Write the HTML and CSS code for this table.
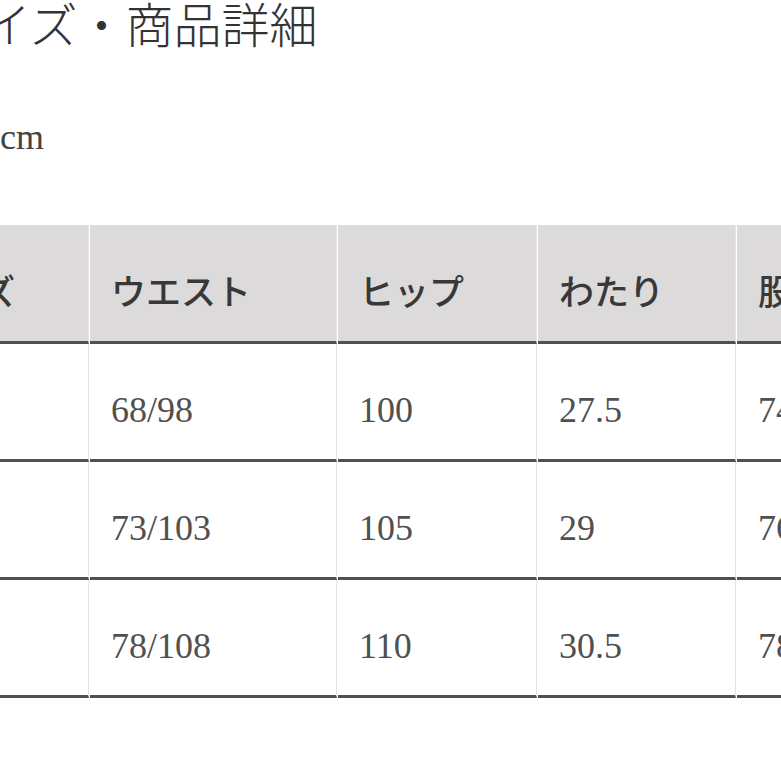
FILE: index.html
```html
<!DOCTYPE html>
<html lang="ja">
<head>
<meta charset="utf-8">
<title>サイズ・商品詳細</title>
<link rel="stylesheet" href="styles.css">
</head>
<body>
<div class="page">
  <h1 class="title">サイズ・商品詳細</h1>
  <p class="unit">cm</p>
  <table class="size-table">
    <colgroup>
      <col class="c-size">
      <col class="c-waist">
      <col class="c-hip">
      <col class="c-thigh">
      <col class="c-inseam">
    </colgroup>
    <thead>
      <tr>
        <th>サイズ</th>
        <th>ウエスト</th>
        <th>ヒップ</th>
        <th>わたり</th>
        <th>股下</th>
      </tr>
    </thead>
    <tbody>
      <tr>
        <td>S</td>
        <td>68/98</td>
        <td>100</td>
        <td>27.5</td>
        <td>74</td>
      </tr>
      <tr>
        <td>M</td>
        <td>73/103</td>
        <td>105</td>
        <td>29</td>
        <td>76</td>
      </tr>
      <tr>
        <td>L</td>
        <td>78/108</td>
        <td>110</td>
        <td>30.5</td>
        <td>78</td>
      </tr>
    </tbody>
  </table>
</div>
</body>
</html>
```
FILE: styles.css
```css
html, body {
  margin: 0;
  padding: 0;
  background: #ffffff;
  overflow: hidden;
}

.page {
  margin-left: -111px;
  width: 1100px;
}

.title {
  margin: 0;
  padding: 3px 0 0 46px;
  font-family: "Liberation Serif", "Noto Sans CJK JP", serif;
  font-size: 48px;
  line-height: 48px;
  font-weight: 300;
  color: #333333;
}

.unit {
  margin: 68px 0 0 0;
  padding-left: 111px;
  font-family: "Liberation Serif", serif;
  font-size: 36px;
  line-height: 36px;
  color: #444444;
}

.size-table {
  margin-top: 70px;
  border-collapse: separate;
  border-spacing: 1px 0;
  table-layout: fixed;
  width: 1049px;
}

.c-size { width: 199px; }
.c-waist { width: 247px; }
.c-hip { width: 199px; }
.c-thigh { width: 198px; }
.c-inseam { width: 200px; }

.size-table th,
.size-table td {
  box-sizing: border-box;
  text-align: left;
  vertical-align: middle;
  padding: 0 0 0 21px;
  border-right: 1px solid #e2e2e2;
  border-bottom: 3px solid #505050;
  white-space: nowrap;
}

.size-table th {
  height: 119px;
  padding-top: 13px;
  background: #dcdadb;
  border-right-color: #e6e4e5;
  font-family: "Noto Sans CJK JP", sans-serif;
  font-size: 35px;
  line-height: 1.2;
  font-weight: 500;
  color: #383838;
}

.size-table td {
  height: 118px;
  padding-top: 19px;
  font-family: "Liberation Serif", serif;
  font-size: 36px;
  line-height: 1.15;
  font-weight: 400;
  color: #505050;
}
```
